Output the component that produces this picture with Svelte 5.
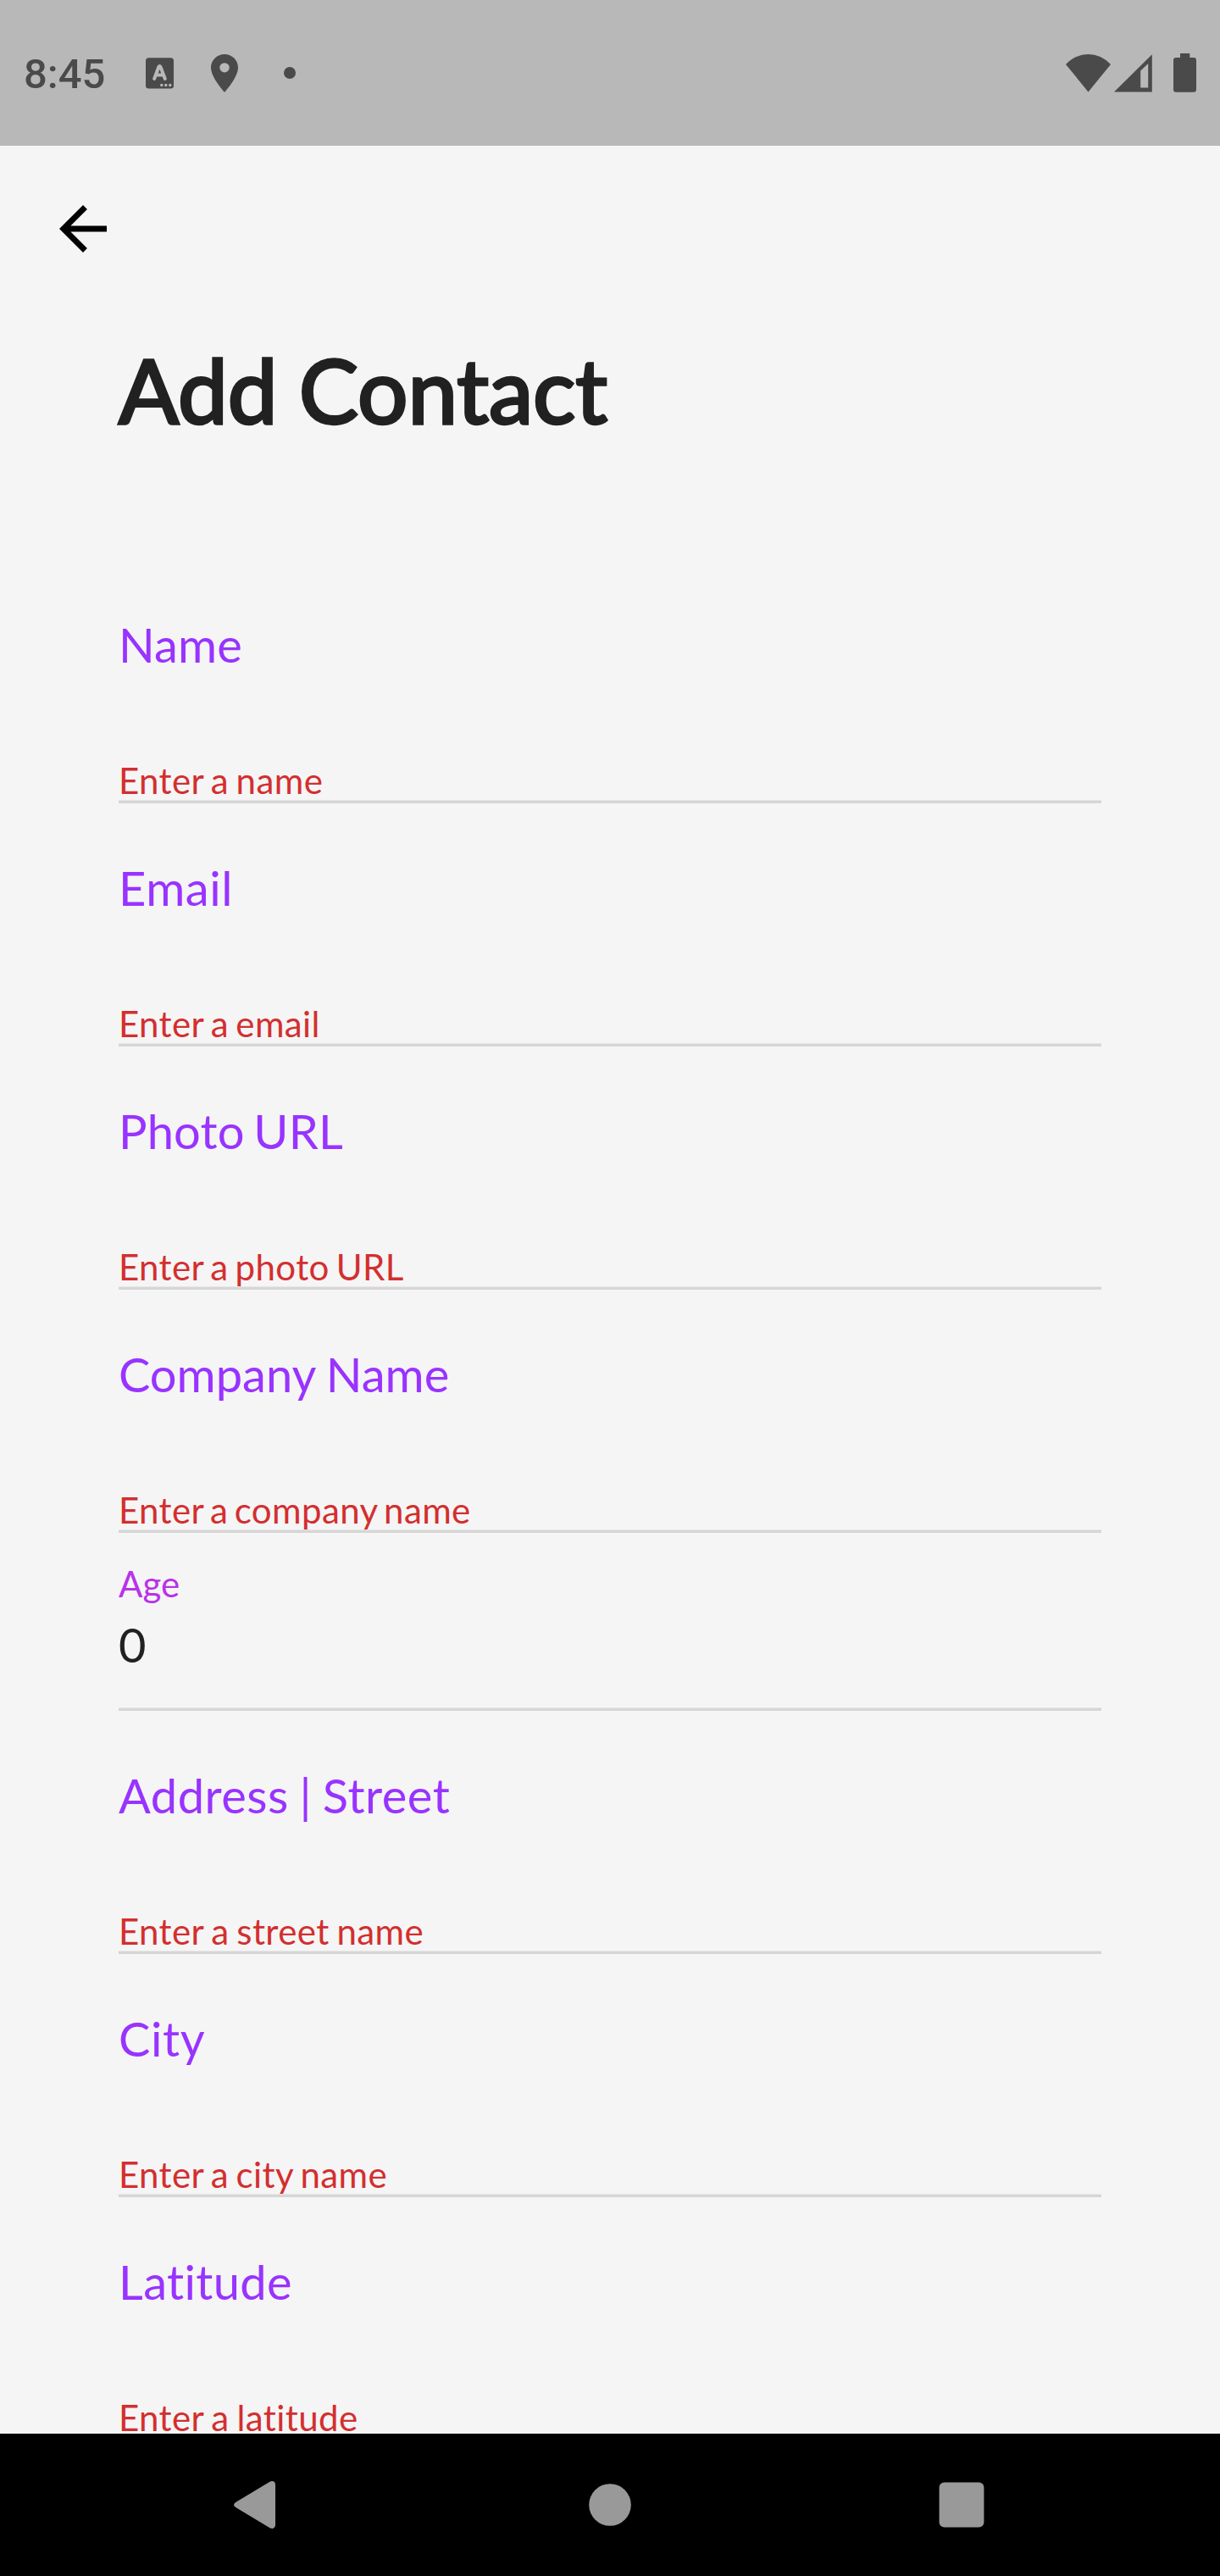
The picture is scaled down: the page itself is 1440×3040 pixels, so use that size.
<script>
  // tracking: [letter-spacing, word-spacing] in px
  const fields = [
    { label: 'Name', tracking: [0.13, 0], error: 'Enter a name', errorTracking: [0.4, -2.65] },
    { label: 'Email', tracking: [0.6, 0], error: 'Enter a email', errorTracking: [0.4, -2.8] },
    { label: 'Photo URL', tracking: [0.2, -3.9], error: 'Enter a photo URL', errorTracking: [0.4, -3.2] },
    { label: 'Company Name', tracking: [0, -1.4], error: 'Enter a company name', errorTracking: [0.4, -3.6] },
    { label: 'Age', tracking: [0, 0], value: '0' },
    { label: 'Address | Street', tracking: [0.5, -2.1], error: 'Enter a street name', errorTracking: [0.4, -2.3] },
    { label: 'City', tracking: [0.6, 0], error: 'Enter a city name', errorTracking: [0.4, -2.7] },
    { label: 'Latitude', tracking: [0.37, 0], error: 'Enter a latitude', errorTracking: [0.4, -2.2] }
  ];
</script>

<div class="screen">
  <header class="status">
    <div class="left">
      <span class="time">8:45</span>
      <svg viewBox="0 0 33 37" width="33" height="37">
        <rect x="0" y="0.2" width="33" height="36.4" rx="3.5" fill="#4a4a4a" />
        <path d="M10.1 25 15.3 11Q16.4 9 17.5 11L22.8 25M12.6 20.6H20.3" fill="none" stroke="#b8b8b8" stroke-width="4" stroke-linecap="round" stroke-linejoin="round" />
        <g fill="#b8b8b8"><circle cx="18.8" cy="32.5" r="1.7" /><circle cx="23.8" cy="32.5" r="1.7" /><circle cx="28.8" cy="32.5" r="1.7" /></g>
      </svg>
      <svg class="pin" viewBox="5 2 14 20" width="32" height="45" preserveAspectRatio="none">
        <path fill="#4a4a4a" d="M12 2C8.13 2 5 5.13 5 9c0 5.25 7 13 7 13s7-7.75 7-13c0-3.87-3.13-7-7-7zm0 9.5a2.5 2.5 0 0 1 0-5 2.5 2.5 0 0 1 0 5z" />
      </svg>
      <span class="dot"></span>
    </div>
    <div class="right">
      <svg viewBox="0 0 53 45" width="53" height="45"><path fill="#4a4a4a" d="M0 12Q11.5 0 26.5 0T53 12L26.5 44.4Z" /></svg>
      <svg class="signal" viewBox="0 0 45 45" width="45" height="45"><path fill="#4a4a4a" fill-rule="evenodd" d="M0 44.6 44.8 0.2V44.6ZM31.2 19.6V39.6H40.2V11Z" /></svg>
      <svg class="battery" viewBox="0 0 27 46" width="27" height="46"><path fill="#4a4a4a" d="M8 0H19.3V5H24Q27 5 27 8V42.7Q27 45.7 24 45.7H3Q0 45.7 0 42.7V8Q0 5 3 5H8Z" /></svg>
    </div>
  </header>

  <main>
    <div class="toolbar">
      <svg viewBox="0 0 24 24" width="84" height="84"><path d="M20 11H7.83l5.59-5.59L12 4l-8 8 8 8 1.41-1.41L7.83 13H20v-2z" /></svg>
    </div>
    <h1>Add Contact</h1>
    <form>
      {#each fields as field}
        <div class="field" class:filled={field.value !== undefined}>
          <div class="label" style:letter-spacing="{field.tracking[0]}px" style:word-spacing="{field.tracking[1]}px">{field.label}</div>
          {#if field.value !== undefined}
            <div class="value">{field.value}</div>
          {:else}
            <div class="error" style:letter-spacing="{field.errorTracking[0]}px" style:word-spacing="{field.errorTracking[1]}px">{field.error}</div>
          {/if}
          <div class="line"></div>
        </div>
      {/each}
    </form>
  </main>

  <nav>
    <svg viewBox="0 0 49 56" width="49" height="56"><path fill="#999" d="M42.5 0.8Q44.5-.4 46.6.2 49 1 49 4V52Q49 55 46.6 55.8 44.5 56.4 42.5 55.2L2.2 31Q0 29.7 0 28T2.2 25Z" /></svg>
    <svg class="home" viewBox="0 0 50 50" width="50" height="50"><circle cx="25" cy="25" r="24.8" fill="#999" /></svg>
    <svg viewBox="0 0 54 54" width="54" height="54"><rect x="0.6" y="0.6" width="52.8" height="52.8" rx="6" fill="#999" /></svg>
  </nav>
</div>

<style>
  :global(body) { margin: 0; }
  .screen {
    width: 1440px;
    height: 3040px;
    display: flex;
    flex-direction: column;
    overflow: hidden;
    background: #f5f5f5;
    font-family: Lato, sans-serif;
    font-variant-ligatures: none;
    color: #212121;
  }
  svg { display: block; flex: none; }
  .status {
    height: 172px;
    flex: none;
    box-sizing: border-box;
    padding: 0 28px;
    display: flex;
    justify-content: space-between;
    align-items: center;
    background: #b8b8b8;
    color: #4a4a4a;
  }
  .left, .right { display: flex; align-items: center; }
  .time {
    width: 144px;
    font: 500 49px/60px Roboto, sans-serif;
    margin-top: 3px;
  }
  .pin { margin-left: 44px; }
  .dot { width: 14px; height: 14px; margin-left: 54px; border-radius: 50%; background: #4a4a4a; }
  .signal { margin-left: 4px; }
  .battery { margin-left: 25px; }
  main { flex: 1; min-height: 0; overflow: hidden; }
  .toolbar { height: 196px; padding: 0 56px; display: flex; align-items: center; }
  h1 {
    margin: 28px 140px 0;
    height: 265px;
    font-size: 105px;
    font-weight: 400;
    line-height: 126px;
    word-spacing: -1.6px;
    -webkit-text-stroke: 3.4px #212121;
    white-space: nowrap;
  }
  form { padding: 0 140px; }
  .field {
    height: 287px;
    box-sizing: border-box;
    padding-top: 70px;
    display: flex;
    flex-direction: column;
  }
  .label {
    font-size: 56px;
    line-height: 60px;
    color: #9933ff;
    white-space: nowrap;
  }
  .error {
    margin-top: 108px;
    font-size: 42px;
    line-height: 44px;
    color: #d32f2f;
    white-space: nowrap;
  }
  /* painted above the error text so descenders stop at the rule */
  .line {
    position: relative;
    flex: none;
    height: 4px;
    margin-top: auto;
    background: linear-gradient(#e6e6e6 1px, #d6d6d6 1px);
  }
  .filled { height: 210px; padding-top: 38px; }
  .filled .label { font-size: 42px; line-height: 44px; color: #b832ea; }
  .value { margin-top: 20px; font-size: 56px; line-height: 60px; }
  nav {
    height: 168px;
    flex: none;
    box-sizing: border-box;
    padding-left: 276px;
    display: flex;
    align-items: center;
    background: #000;
  }
  .home { margin: 0 363px 0 370px; }
</style>
